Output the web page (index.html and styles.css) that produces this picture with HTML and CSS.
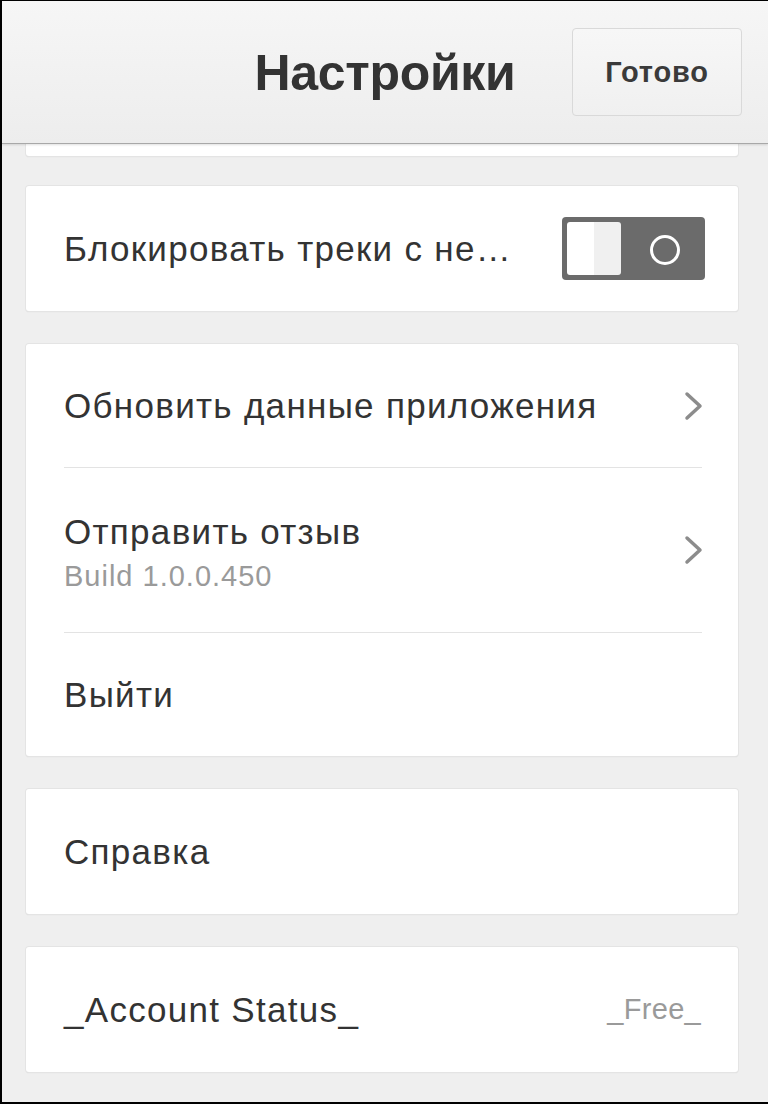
FILE: index.html
```html
<!DOCTYPE html>
<html lang="ru">
<head>
    <meta charset="UTF-8">
    <meta name="viewport" content="width=device-width, initial-scale=1.0">
    <title>Настройки</title>
    <link rel="stylesheet" href="styles.css">
</head>
<body>
    <div class="screen">
        <header class="topbar">
            <h1 class="title">Настройки</h1>
            <button class="done">Готово</button>
        </header>

        <main class="list">
            <!-- bottom of the card scrolled up under the bar -->
            <div class="card card-tail"></div>

            <section class="card">
                <div class="row row-single">
                    <span class="label">Блокировать треки с не…</span>
                    <span class="switch">
                        <span class="knob"></span>
                        <span class="ring"></span>
                    </span>
                </div>
            </section>

            <section class="card">
                <div class="row">
                    <span class="label">Обновить данные приложения</span>
                    <svg class="chevron" width="20" height="30" viewBox="0 0 20 30">
                        <path d="M3 3 L16 15 L3 27" fill="none" stroke="#8c8c8c" stroke-width="3.5" stroke-linecap="round" stroke-linejoin="round"/>
                    </svg>
                </div>
                <div class="divider"></div>
                <div class="row row-tall">
                    <div class="stack">
                        <span class="label">Отправить отзыв</span>
                        <span class="sub">Build 1.0.0.450</span>
                    </div>
                    <svg class="chevron" width="20" height="30" viewBox="0 0 20 30">
                        <path d="M3 3 L16 15 L3 27" fill="none" stroke="#8c8c8c" stroke-width="3.5" stroke-linecap="round" stroke-linejoin="round"/>
                    </svg>
                </div>
                <div class="divider"></div>
                <div class="row">
                    <span class="label">Выйти</span>
                </div>
            </section>

            <section class="card">
                <div class="row row-single">
                    <span class="label">Справка</span>
                </div>
            </section>

            <section class="card">
                <div class="row row-single">
                    <span class="label">_Account Status_</span>
                    <span class="value">_Free_</span>
                </div>
            </section>
        </main>
    </div>
</body>
</html>
```

FILE: styles.css
```css
html, body {
    margin: 0;
    padding: 0;
}
body {
    font-family: "Liberation Sans", Arial, sans-serif;
    background: #000;
    color: #333;
}
.screen {
    box-sizing: border-box;
    width: 768px;
    height: 1104px;
    border-left: 2px solid #000;
    border-top: 1px solid #000;
    border-bottom: 2px solid #000;
    background: #efefef;
    overflow: hidden;
}
.topbar {
    position: relative;
    z-index: 1;
    height: 142px;
    display: grid;
    grid-template-columns: 1fr auto 1fr;
    align-items: center;
    background: linear-gradient(#f6f6f6, #ededed);
    border-bottom: 1px solid #a8a8a8;
    box-shadow: 0 1px 2px rgba(0, 0, 0, 0.12);
}
.title {
    grid-column: 2;
    margin: 2px 0 0;
    font-size: 50px;
    font-weight: bold;
    color: #333;
    letter-spacing: -0.3px;
}
.done {
    grid-column: 3;
    justify-self: end;
    margin-right: 26px;
    width: 170px;
    height: 88px;
    padding: 0;
    font-family: inherit;
    font-size: 29px;
    font-weight: bold;
    letter-spacing: 0.8px;
    color: #3a3a3a;
    background: linear-gradient(#f7f7f7, #f0f0f0);
    border: 1px solid #d9d9d9;
    border-radius: 4px;
}
.list {
    display: flex;
    flex-direction: column;
    gap: 33px;
    padding-left: 24px;
}
.card {
    width: 712px;
    background: #fff;
    border-radius: 3px;
    box-shadow: 0 0 0 1px #e4e4e4, 0 1px 1px #cfcfcf;
}
.card-tail {
    height: 12px;
    margin-bottom: -3px;
    border-radius: 0 0 3px 3px;
}
.row {
    height: 123px;
    display: flex;
    align-items: center;
    justify-content: space-between;
    padding: 0 35px 0 38px;
}
.row-single {
    height: 125px;
}
.row-tall {
    height: 164px;
}
.label {
    font-size: 35px;
    letter-spacing: 1.3px;
    color: #333;
    white-space: nowrap;
}
.stack {
    display: flex;
    flex-direction: column;
    gap: 8px;
    padding-top: 4px;
}
.sub {
    font-size: 29px;
    letter-spacing: 1px;
    color: #9a9a9a;
}
.value {
    font-size: 29px;
    letter-spacing: 0.3px;
    color: #9a9a9a;
    margin-right: 2px;
}
.divider {
    height: 1px;
    margin: 0 36px 0 38px;
    background: #e3e3e3;
}
.chevron {
    margin-right: -1px;
}
.switch {
    position: relative;
    width: 143px;
    height: 63px;
    margin-right: -2px;
    background: #6b6b6b;
    border-radius: 4px;
}
.knob {
    position: absolute;
    left: 5px;
    top: 5px;
    width: 54px;
    height: 53px;
    border-radius: 3px;
    background: linear-gradient(90deg, #fff 50%, #f0f0f0 50%);
}
.ring {
    position: absolute;
    left: 88px;
    top: 18px;
    width: 24px;
    height: 24px;
    border: 3px solid #fff;
    border-radius: 50%;
}
```
